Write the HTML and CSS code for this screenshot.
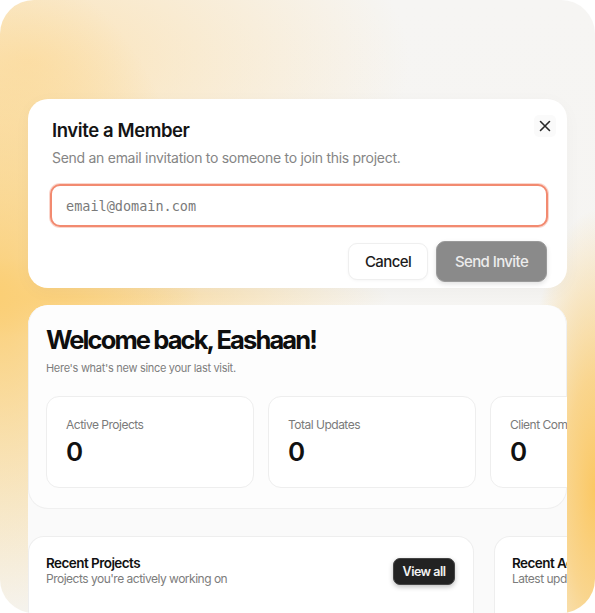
FILE: index.html
```html
<!DOCTYPE html>
<html lang="en">
<head>
<meta charset="utf-8">
<title>Invite a Member</title>
<link rel="stylesheet" href="styles.css">
</head>
<body>
<div class="frame">
  <div class="modal">
    <div class="modal-head">
      <h2 class="modal-title">Invite a Member</h2>
      <button class="close" aria-label="Close">
        <svg width="12" height="12" viewBox="0 0 12 12"><path d="M1.5 1.5 L10.5 10.5 M10.5 1.5 L1.5 10.5" stroke="#2a2a2a" stroke-width="1.6" stroke-linecap="round" fill="none"/></svg>
      </button>
    </div>
    <p class="modal-sub">Send an email invitation to someone to join this project.</p>
    <div class="input">email@domain.com</div>
    <div class="actions">
      <button class="btn cancel">Cancel</button>
      <button class="btn send">Send Invite</button>
    </div>
  </div>

  <div class="dash">
    <section class="welcome">
      <h1 class="welcome-title">Welcome back, Eashaan!</h1>
      <p class="welcome-sub">Here's what's new since your last visit.</p>
      <div class="stats">
        <div class="stat"><div class="stat-label">Active Projects</div><div class="stat-value">0</div></div>
        <div class="stat"><div class="stat-label">Total Updates</div><div class="stat-value">0</div></div>
        <div class="stat"><div class="stat-label">Client Comments</div><div class="stat-value">0</div></div>
      </div>
    </section>
    <div class="recent-row">
      <div class="rcard rcard-main">
        <div class="rcard-text">
          <h3 class="rcard-title">Recent Projects</h3>
          <p class="rcard-sub">Projects you're actively working on</p>
        </div>
        <button class="viewall">View all</button>
      </div>
      <div class="rcard rcard-side">
        <div class="rcard-text">
          <h3 class="rcard-title">Recent Activity</h3>
          <p class="rcard-sub">Latest updates from your team</p>
        </div>
      </div>
    </div>
  </div>
</div>
</body>
</html>
```

FILE: styles.css
```css
* { box-sizing: border-box; }
html, body { margin: 0; padding: 0; background: #ffffff; }
body { font-family: Inter, "Noto Sans", sans-serif; color: #111; }

.frame {
  width: 595px;
  height: 613px;
  border-radius: 34px;
  overflow: hidden;
  padding: 99px 28px 0 28px;
  display: flex;
  flex-direction: column;
  gap: 17px;
  background:
    radial-gradient(ellipse 75px 280px at 100% 80%, #fbc864 0%, rgba(251,200,100,0.7) 40%, rgba(251,200,100,0) 100%),
    radial-gradient(ellipse 200px 330px at 0% 48%, #fbcf76 0%, rgba(251,207,118,0.55) 45%, rgba(251,207,118,0) 100%),
    radial-gradient(ellipse 380px 200px at 5% 10%, rgba(252,225,176,0.9) 0%, rgba(252,225,176,0) 100%),
    radial-gradient(ellipse 330px 40px at 10% 48.5%, rgba(251,210,130,0.9) 0%, rgba(251,210,130,0) 100%),
    linear-gradient(180deg, #f6f5f3 0%, #f5f4f1 100%);
}

/* ---------- Modal ---------- */
.modal {
  flex: 0 0 189px;
  background: #ffffff;
  border-radius: 20px;
  padding: 19px 19px 0 24px;
  box-shadow: 0 4px 18px rgba(0,0,0,0.03);
  display: flex;
  flex-direction: column;
}
.modal-head {
  display: flex;
  justify-content: space-between;
  align-items: flex-start;
}
.modal-title {
  margin: 0;
  font-size: 18.5px;
  line-height: 24px;
  font-weight: 600;
  letter-spacing: -0.4px;
  color: #141414;
}
.close {
  border: 0;
  background: #fafafa;
  width: 22px;
  height: 22px;
  margin-top: -3px;
  margin-right: -8px;
  border-radius: 5px;
  padding: 0;
  display: flex;
  align-items: center;
  justify-content: center;
}
.modal-sub {
  margin: 6px 0 0 0;
  font-size: 14px;
  line-height: 20px;
  color: #858585;
  letter-spacing: -0.28px;
}
.input {
  margin: 16px 0 0 -2px;
  height: 43px;
  border: 2.5px solid #f28a70;
  box-shadow: 0 0 0 1px rgba(242,138,112,0.35);
  border-radius: 10px;
  padding: 0 0 0 14px;
  display: flex;
  align-items: center;
  font-family: "DejaVu Sans Mono", "Liberation Mono", monospace;
  font-size: 13.5px;
  color: #7a7a7a;
  background: #fff;
}
.actions {
  margin-top: 14px;
  display: flex;
  justify-content: flex-end;
  align-items: center;
  gap: 8px;
  padding-right: 1px;
}
.btn {
  font-family: Inter, "Noto Sans", sans-serif;
  font-size: 15px;
  font-weight: 500;
  letter-spacing: -0.6px;
  border-radius: 9px;
  cursor: pointer;
}
.cancel {
  width: 80px;
  height: 37px;
  background: #fff;
  color: #1c1c1c;
  border: 1px solid #efefef;
  box-shadow: 0 1px 3px rgba(0,0,0,0.04);
}
.send {
  width: 111px;
  height: 41px;
  background: #8a8a8a;
  color: #ececec;
  border: 1px solid #9a9a9a;
  box-shadow: 0 2px 5px rgba(0,0,0,0.12);
}

/* ---------- Dashboard ---------- */
.dash {
  flex: 1 1 auto;
  min-height: 0;
  overflow: hidden;
  background: #fafafa;
  border-radius: 20px 20px 0 0;
  display: flex;
  flex-direction: column;
  gap: 27px;
}
.welcome {
  flex: 0 0 auto;
  background: #fdfdfd;
  border: 1px solid #f0f0f0;
  border-top: 0;
  border-radius: 20px;
  padding: 19px 0 20px 17px;
}
.welcome-title {
  margin: 0;
  font-size: 25.5px;
  line-height: 32px;
  font-weight: 700;
  letter-spacing: -1.9px;
  color: #0e0e0e;
  white-space: nowrap;
}
.welcome-sub {
  margin: 4px 0 0 0;
  font-size: 11px;
  line-height: 16px;
  color: #7d7d7d;
  letter-spacing: -0.3px;
}
.stats {
  margin-top: 20px;
  display: flex;
  gap: 14px;
}
.stat {
  flex: 0 0 208px;
  height: 92px;
  background: #fff;
  border: 1px solid #eeeeee;
  border-radius: 13px;
  padding: 20px 19px;
}
.stat-label {
  font-size: 12px;
  line-height: 16px;
  color: #7a7a7a;
  letter-spacing: -0.5px;
  white-space: nowrap;
}
.stat-value {
  margin-top: 4px;
  font-size: 26px;
  line-height: 30px;
  font-weight: 600;
  color: #111;
}

.recent-row {
  display: flex;
  gap: 20px;
  flex: 1 1 auto;
}
.rcard {
  flex: 0 0 auto;
  background: #fff;
  border: 1px solid #eeeeee;
  border-bottom: 0;
  border-radius: 16px 16px 0 0;
  padding: 18px 18px 0 17px;
  display: flex;
  justify-content: space-between;
  align-items: flex-start;
}
.rcard-main { width: 446px; }
.rcard-side { width: 200px; }
.rcard-title {
  margin: 0;
  font-size: 13.5px;
  line-height: 16px;
  font-weight: 600;
  letter-spacing: -0.55px;
  color: #111;
  white-space: nowrap;
}
.rcard-sub {
  margin: 0;
  font-size: 12px;
  line-height: 15px;
  color: #7c7c7c;
  letter-spacing: -0.5px;
  white-space: nowrap;
}
.viewall {
  margin-top: 3px;
  width: 62px;
  height: 27px;
  background: #222;
  color: #f2f2f2;
  border: 1px solid #444;
  border-radius: 7px;
  font-family: Inter, "Noto Sans", sans-serif;
  font-size: 12.5px;
  font-weight: 600;
  letter-spacing: -0.5px;
  box-shadow: 0 2px 5px rgba(0,0,0,0.25);
  padding: 0;
}
```
